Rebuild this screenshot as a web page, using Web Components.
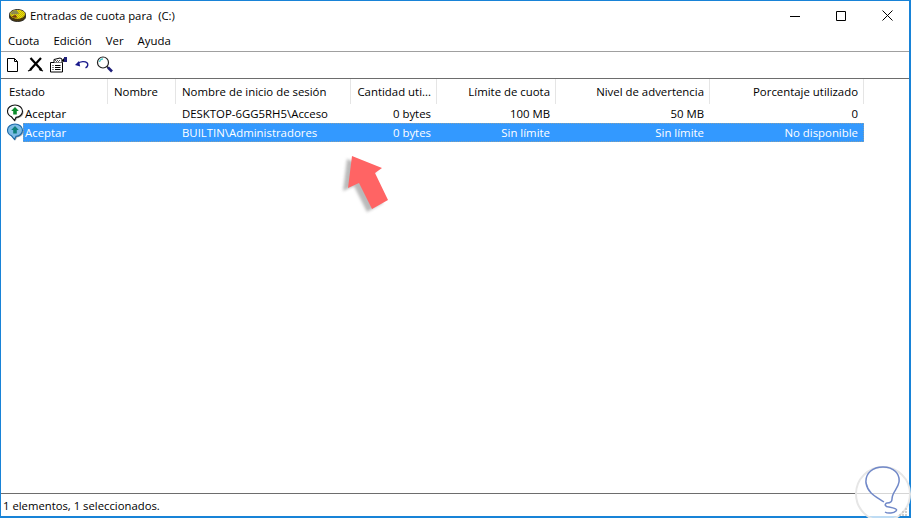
<!DOCTYPE html>
<html>
<head>
<meta charset="utf-8">
<title>Entradas de cuota</title>
<style>
  html, body { margin: 0; height: 100%; overflow: hidden; background: #fff; }
  body { font: 11.4px "Open Sans", "Noto Sans", sans-serif; color: #000; }
</style>
</head>
<body>
<quota-window>
  <quota-titlebar slot="title">Entradas de cuota para&nbsp; (C:)</quota-titlebar>
  <quota-menu slot="menu"><span>Cuota</span><span>Edición</span><span>Ver</span><span>Ayuda</span></quota-menu>
  <quota-toolbar slot="tools"></quota-toolbar>
  <quota-table slot="table"></quota-table>
  <quota-status slot="status">1 elementos, 1 seleccionados.</quota-status>
</quota-window>
<quota-arrow></quota-arrow>
<quota-watermark></quota-watermark>
<script>
const FONT = `"Open Sans", "Noto Sans", sans-serif`;

function define(name, html) {
  customElements.define(name, class extends HTMLElement {
    constructor() {
      super();
      this.attachShadow({mode: "open"}).innerHTML = html;
    }
  });
}

define("quota-window", `
  <style>
    :host { display: flex; flex-direction: column; box-sizing: border-box; width: 911px; height: 518px;
      border: 1px solid #1883d7; border-width: 1px 2px 2px 1px; background: #fff; }
    .grow { flex: 1; display: flex; min-height: 0; }
  </style>
  <slot name="title"></slot>
  <slot name="menu"></slot>
  <slot name="tools"></slot>
  <div class="grow"><slot name="table"></slot></div>
  <slot name="status"></slot>`);

define("quota-titlebar", `
  <style>
    :host { display: flex; align-items: center; height: 29px; padding-left: 8px; margin-right: -1px; }
    svg { flex: none; }
    .t { flex: 1; margin-left: 4px; white-space: nowrap; font-family: ${FONT}; font-size: 11.3px; }
    .b { width: 46px; height: 29px; display: flex; align-items: center; justify-content: center; }
  </style>
  <svg width="17" height="13" viewBox="0 0 17 13">
    <defs><pattern id="d" width="2" height="2" patternUnits="userSpaceOnUse">
      <rect width="2" height="2" fill="#f6e400"/><rect width="1" height="1" fill="#b9ae10"/><rect x="1" y="1" width="1" height="1" fill="#b9ae10"/>
    </pattern></defs>
    <path d="M.5 5.500C.5 2.800 4 .5 8.500 .5s8 2.300 8 5v2.500c0 2.500-3.500 4.500-8 4.500s-8-2-8-4.500z" fill="#4a3a10" stroke="#1c1c1c" stroke-width=".8"/>
    <ellipse cx="8.500" cy="5.200" rx="7.300" ry="4.200" fill="#f6e400"/>
    <ellipse cx="8.500" cy="5.200" rx="7.300" ry="4.200" fill="url(#d)"/>
    <path d="M1.400 5.500C1.700 3 4.500 1.300 7.500 1.100L10 5z" fill="#8d8a50"/>
    <path d="M2.500 7.500l4-1.800 2 2.800-3.500.2z" fill="#7a3d10"/>
  </svg>
  <span class="t"><slot></slot></span>
  <span class="b"><svg width="10" height="10"><path d="M0 5.500h10" stroke="#000"/></svg></span>
  <span class="b"><svg width="10" height="10"><path d="M.5.500h9v9h-9z" fill="none" stroke="#000"/></svg></span>
  <span class="b"><svg width="11" height="11"><path d="M.5.500l10 10M10.500.500l-10 10" stroke="#000"/></svg></span>`);

define("quota-menu", `
  <style>
    :host { display: flex; align-items: center; gap: 14px; height: 21px; padding-left: 7px;
      border-bottom: 1px solid #a0a0a0; font-family: ${FONT}; font-size: 11.4px; }
  </style>
  <slot></slot>`);

define("quota-toolbar", `
  <style>
    :host { display: flex; height: 26px; border-bottom: 1px solid #6d6d6d; }
    span { width: 23px; height: 24px; display: flex; align-items: center; justify-content: center; flex: none; }
    svg { display: block; }
  </style>
  <span><svg width="17" height="17" viewBox="0 0 17 17"><path d="M3.500 2.500h7l3 3v10h-10z" fill="#fff" stroke="#000"/><path d="M10.500 2.500v3h3" fill="none" stroke="#000"/></svg></span>
  <span><svg width="17" height="17" viewBox="0 0 17 17"><path d="M3.500 2l11 12M14 2L3 14" stroke="#000" stroke-width="2.200"/><path d="M1 15l4-1.500M12 13.500l4 1.500" stroke="#000" stroke-width="1.300"/></svg></span>
  <span><svg width="17" height="17" viewBox="0 0 17 17"><path d="M.5 6.500h12v9.500H.5z" fill="#fff" stroke="#000"/><path d="M2.500 9.500h1M5 9.500h5.500M2.500 11.500h1M5 11.500h5.500M2.500 13.500h1M5 13.500h5.500" stroke="#000"/><path d="M4 6.500V3.500l6-1.500 2 1v3.500" fill="#fff" stroke="#000"/><path d="M5 4h1v1H5zM7 4h1v1H7zM9 4h1v1H9zM6 5h1v1H6zM8 5h1v1H8z" fill="#555"/><path d="M11.500 5l2.500-3v4z" fill="#000"/><path d="M14 1h3v5h-3z" fill="#20207a"/></svg></span>
  <span><svg width="17" height="17" viewBox="0 0 17 17"><path d="M2 9l4-4 1.200 5.500z" fill="#1a1a8c"/><path d="M4.500 7.800C7.500 5.200 12 5 14 6.800c1.500 1.500.8 4-1.500 5" fill="none" stroke="#1a1a8c" stroke-width="1.400"/></svg></span>
  <span><svg width="17" height="17" viewBox="0 0 17 17"><circle cx="7" cy="6.500" r="5.500" fill="#fff" stroke="#222" stroke-width="1.200"/><path d="M3.500 6c.4-2 1.700-3 3.500-3.200" fill="none" stroke="#45c8c8" stroke-width="1.200"/><path d="M11 10.500l1.500 1.500" stroke="#222" stroke-width="1.500"/><path d="M12 11.500l4 4" stroke="#20207a" stroke-width="2.600"/></svg></span>`);

const COLS = [
  ["Estado", 107, "l"], ["Nombre", 68, "l"], ["Nombre de inicio de sesión", 175, "l"],
  ["Cantidad uti...", 86, "r"], ["Límite de cuota", 119, "r"], ["Nivel de advertencia", 154, "r"],
  ["Porcentaje utilizado", 154, "r"]
];
const ROWS = [
  ["Aceptar", "", "DESKTOP-6GG5RH5\\Acceso", "0 bytes", "100 MB", "50 MB", "0"],
  ["Aceptar", "", "BUILTIN\\Administradores", "0 bytes", "Sin límite", "Sin límite", "No disponible"]
];
const TEMPLATE = COLS.map(c => c[1] + "px").join(" ");
const bubble = (fill, line, arrow) => `<svg class="ic" width="18" height="19" viewBox="0 0 18 19">
  <path d="M9 2c4 0 7.500 2.700 7.500 6.200 0 3.400-3 6-6.500 6.200L8.500 17.500l-3-3.700C3 12.700 1.500 10.700 1.500 8.200 1.500 4.700 5 2 9 2z" fill="#8a8a8a" opacity=".7"/>
  <path d="M8 1C12 1 15.500 3.700 15.500 7.200c0 3.400-3 6-6.500 6.200L7.500 16.500l-3-3.700C2 11.700.5 9.700.5 7.200.5 3.700 4 1 8 1z" fill="${fill}" stroke="${line}" stroke-width="1.100"/>
  <path d="M8 3l3.800 4H9.800v3.500H6.200V7H4.200z" fill="${arrow}"/></svg>`;

define("quota-table", `
  <style>
    :host { display: block; flex: 1; font-family: ${FONT}; font-size: 11.4px; }
    .row { display: grid; grid-template-columns: ${TEMPLATE}; width: 863px; position: relative; }
    .head { height: 25px; }
    .head div { display: flex; align-items: center; padding: 0 5px 0 6px; border-right: 1px solid #e5e5e5; box-sizing: border-box; white-space: nowrap; }
    .head div:first-child { padding-left: 8px; }
    .head .r, .cell.r { justify-content: flex-end; }
    .cell { display: flex; align-items: center; height: 19px; padding: 0 6px; box-sizing: border-box; white-space: nowrap; overflow: hidden; }
    .cell.first { position: relative; overflow: visible; }
    .first span { margin-left: 18px; }
    .ic { position: absolute; left: 6px; top: 0; }
    .sel .cell { background: #3399ff; color: #fff; }
    .sel .first { background: linear-gradient(to right, #fff 22px, #3399ff 22px); }
    .sel::after { content: ""; position: absolute; inset: 0 0 0 22px; border: 1px dotted #c9a56a; opacity: .55; pointer-events: none; }
  </style>
  <div class="row head">${COLS.map(c => `<div class="${c[2]}">${c[0]}</div>`).join("")}</div>
  ${ROWS.map((r, i) => `<div class="row ${i ? "sel" : ""}">${r.map((v, j) =>
    j === 0 ? `<div class="cell first">${i ? bubble("#7cbbe6", "#1e6aa8", "#0e7f7a") : bubble("#fff", "#111", "#0a8a2a")}<span>${v}</span></div>`
            : `<div class="cell ${COLS[j][2]}">${v}</div>`).join("")}</div>`).join("")}`);

define("quota-status", `
  <style>
    :host { display: block; box-sizing: border-box; height: 23px; padding: 3px 0 0 2px; line-height: 18px;
      border-top: 1px solid #6d6d6d; font-family: ${FONT}; font-size: 11.3px; }
  </style>
  <slot></slot>`);

define("quota-arrow", `
  <style>:host { position: absolute; left: 336px; top: 150px; width: 60px; height: 68px; }</style>
  <svg width="60" height="68" viewBox="336 150 60 68">
    <defs><filter id="b"><feGaussianBlur stdDeviation="1.500"/></filter></defs>
    <path d="M347 159L377 171L370 176L383 203L367 212L354 186L343 191Z" fill="#8c8c8c" opacity=".6" filter="url(#b)"/>
    <path d="M352 156L382 168L375 173L388 200L372 209L359 183L348 188Z" fill="#ff6464"/>
  </svg>`);

define("quota-watermark", `
  <style>:host { position: absolute; right: 0; bottom: 0; width: 60px; height: 60px; overflow: hidden; }</style>
  <svg width="60" height="60" viewBox="851 458 60 60">
    <circle cx="883" cy="494" r="27" fill="#fff" fill-opacity=".72" stroke="#e6e6e6" stroke-width="2"/>
    <path d="M884 502C877 497 868 494 866 483C865 473 873 467 883 467C894 467 900 474 899 482C898 489 892 492 892 499C892 502 890 503 887 503C884 504 885 507 889 507C894 508 898 509 896 511C894 513 888 514 885 512" fill="none" stroke="#7088c8" stroke-width="1.500"/>
    <g fill="#cfcfcf">
      <rect x="905" y="508" width="2" height="2"/><rect x="902" y="511" width="2" height="2"/><rect x="905" y="511" width="2" height="2"/>
      <rect x="899" y="514" width="2" height="2"/><rect x="902" y="514" width="2" height="2"/><rect x="905" y="514" width="2" height="2"/>
    </g>
  </svg>`);
</script>
</body>
</html>
